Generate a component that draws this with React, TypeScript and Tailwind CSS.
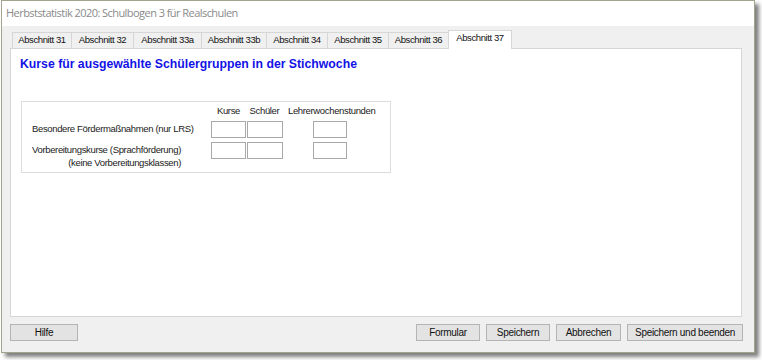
import React from "react";

const tabs = [
  { label: "Abschnitt 31", w: "w-[60px]" },
  { label: "Abschnitt 32", w: "w-[63px]" },
  { label: "Abschnitt 33a", w: "w-[69px]" },
  { label: "Abschnitt 33b", w: "w-[66px]" },
  { label: "Abschnitt 34", w: "w-[62px]" },
  { label: "Abschnitt 35", w: "w-[62px]" },
  { label: "Abschnitt 36", w: "w-[61px]" },
];

const Box: React.FC<{ className?: string }> = ({ className = "" }) => (
  <div className={`h-[17px] border border-[#a8a8a8] bg-white ${className}`} />
);

const WinButton: React.FC<{ label: string; className: string }> = ({ label, className }) => (
  <button
    type="button"
    className={`h-[17px] border border-[#b4b4b4] bg-[#e3e3e3] text-[10px] tracking-[-0.3px] text-[#111] leading-none ${className}`}
  >
    {label}
  </button>
);

const App: React.FC = () => {
  return (
    <div className="w-[762px] h-[360px] bg-white font-['Liberation_Sans',Arial,sans-serif] overflow-hidden">
      <div className="ml-px w-[754px] h-[353px] flex flex-col border border-[#a3a38e] bg-white shadow-[4px_4px_4px_rgba(0,0,0,0.5)]">
        {/* title bar */}
        <div className="h-[25px] flex items-center pl-[4px] font-['Open_Sans',sans-serif] text-[11px] tracking-[-0.55px] text-[#8a8a8a]">
          Herbststatistik 2020: Schulbogen 3 für Realschulen
        </div>

        <div className="flex-1 bg-[#f0f0f0] pl-[8px] pt-[3px] flex flex-col">
          {/* tabs */}
          <div className="flex items-end h-[19px] pl-[2px] text-[9.5px] tracking-[-0.4px] text-[#111]">
            {tabs.map((t) => (
              <div
                key={t.label}
                className={`${t.w} h-[16px] border border-b-0 border-[#d6d6d6] -ml-px first:ml-0 flex items-center justify-center bg-[#f0f0f0]`}
              >
                {t.label}
              </div>
            ))}
            <div className="w-[64px] h-[19px] -ml-px border border-b-0 border-[#d6d6d6] bg-white relative z-10 -mb-px pb-[4px] flex items-center justify-center">
              Abschnitt 37
            </div>
          </div>

          {/* panel */}
          <div className="w-[732px] h-[269px] bg-white border border-[#d6d6d6] pt-[7px]">
            <div className="ml-[9px] h-[17px] leading-[17px] text-[12.25px] font-bold text-[#1212e6]">
              Kurse für ausgewählte Schülergruppen in der Stichwoche
            </div>

            <div className="ml-[10px] mt-[28px] w-[370px] h-[72px] border border-[#dcdcdc] pt-[3px] text-[9.5px] tracking-[-0.35px] text-[#1a1a1a]">
              <div className="flex h-[12px] leading-[12px]">
                <div className="w-[189px]" />
                <div className="w-[35px] text-center">Kurse</div>
                <div className="w-[37px] text-center">Schüler</div>
                <div className="ml-[5px]">Lehrerwochenstunden</div>
              </div>

              <div className="flex items-center mt-[4px]">
                <div className="w-[189px] pl-[10px]">Besondere Fördermaßnahmen (nur LRS)</div>
                <Box className="w-[35px]" />
                <Box className="w-[36px] ml-px" />
                <Box className="w-[34px] ml-[30px]" />
              </div>

              <div className="flex items-start mt-[4px]">
                <div className="w-[189px] pl-[10px]">
                  <div className="inline-block text-right leading-[13px] pt-px">
                    Vorbereitungskurse (Sprachförderung)
                    <br />
                    (keine Vorbereitungsklassen)
                  </div>
                </div>
                <Box className="w-[35px]" />
                <Box className="w-[36px] ml-px" />
                <Box className="w-[34px] ml-[30px]" />
              </div>
            </div>
          </div>

          {/* buttons */}
          <div className="flex mt-[7px] w-[733px]">
            <WinButton label="Hilfe" className="w-[68px]" />
            <div className="flex-1" />
            <WinButton label="Formular" className="w-[64px]" />
            <WinButton label="Speichern" className="w-[64px] ml-[6px]" />
            <WinButton label="Abbrechen" className="w-[65px] ml-[6px]" />
            <WinButton label="Speichern und beenden" className="w-[116px] ml-[6px]" />
          </div>
        </div>
      </div>
    </div>
  );
};

export default App;
